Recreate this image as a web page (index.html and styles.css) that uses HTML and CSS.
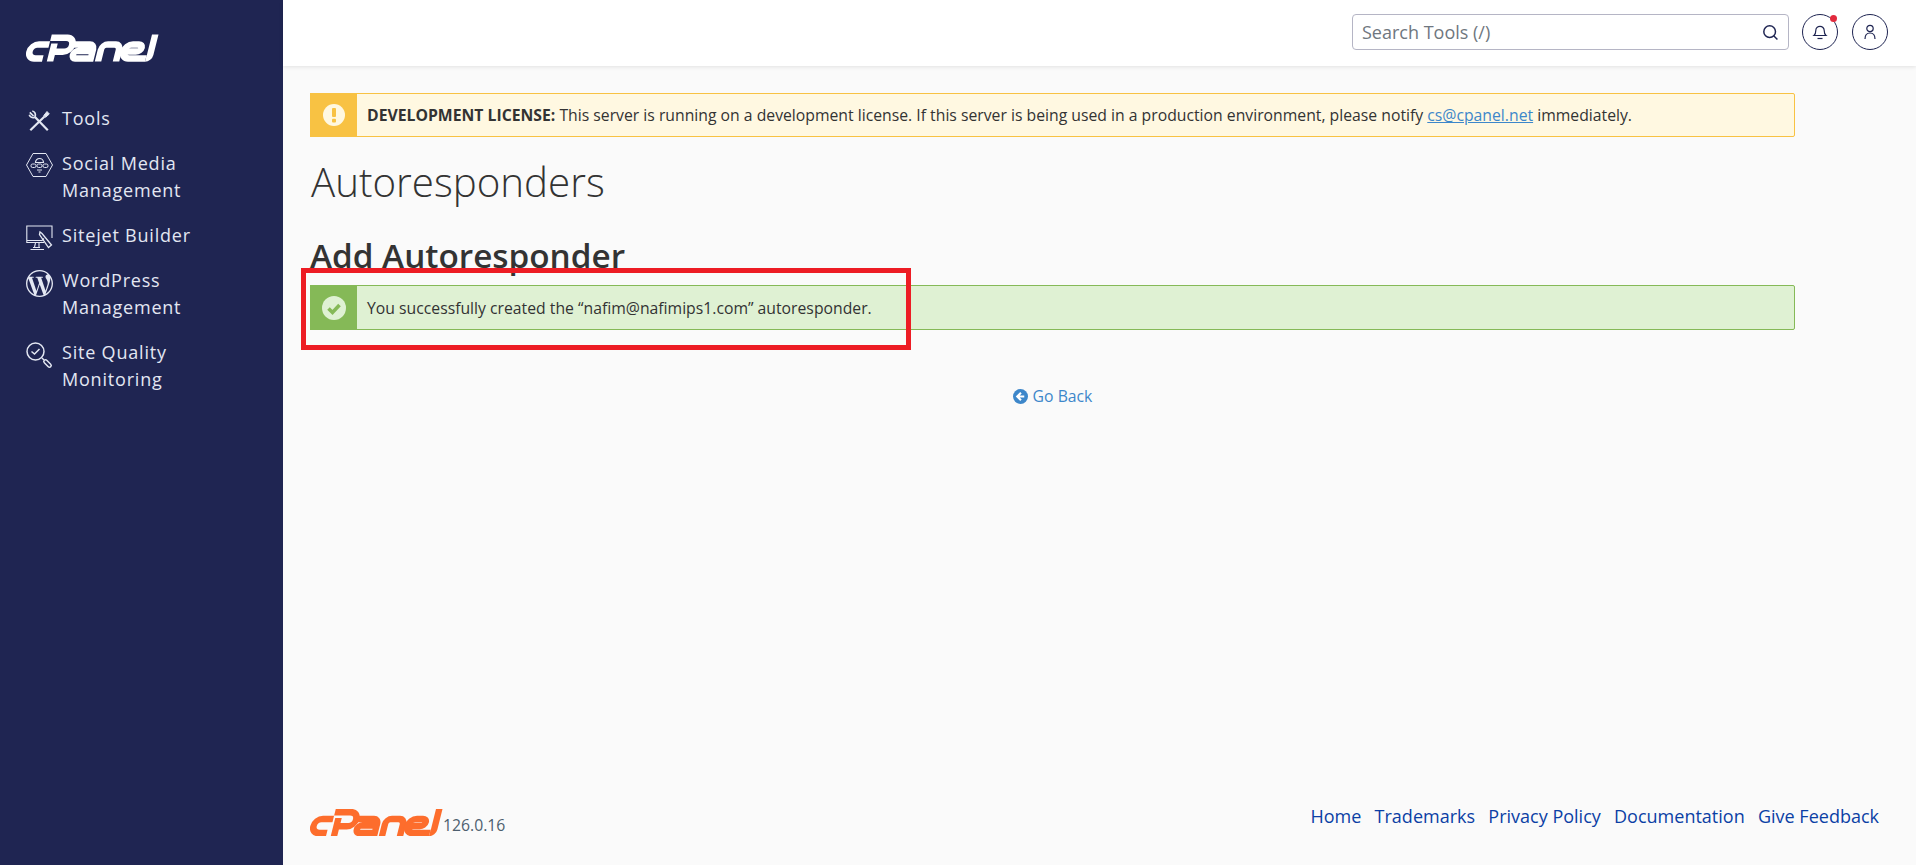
FILE: index.html
```html
<!DOCTYPE html>
<html lang="en">
<head>
<meta charset="utf-8">
<title>Autoresponders</title>
<link rel="stylesheet" href="styles.css">
</head>
<body>
<svg class="defs" width="0" height="0" aria-hidden="true">
  <symbol id="cpanel-logo" viewBox="0 0 133 27">
    <g transform="translate(6.750 0) skewX(-14)" fill="none" stroke="currentColor" stroke-width="6.500">
      <path d="M19 10H8a7 7 0 0 0 0 14H16"/>
      <path d="M19 3.200H35a7 7 0 0 1 0 14H27M24 9V27"/>
      <path d="M42 10H59a5 5 0 0 1 5 5V24H49a3.750 3.750 0 0 1 0-7.500H63"/>
      <path d="M72 27V15a5 5 0 0 1 5-5H85a5 5 0 0 1 5 5V27"/>
      <path d="M119 24H102a7 7 0 0 1 0-14H108a4.250 3.500 0 0 1 0 7H96"/>
      <path d="M122.500 0V20.500a3.500 3.500 0 0 1-3.500 3.500"/>
    </g>
  </symbol>
</svg>
<div class="app">
  <aside class="sidebar">
    <svg class="logo" aria-label="cPanel"><use href="#cpanel-logo"/></svg>
    <nav class="nav">
      <a class="nav-item">
        <svg class="nav-icon" viewBox="0 0 27 27" fill="none" stroke="currentColor" stroke-width="2.200"><path d="M8.500 8.500 21.800 22.300"/><path d="M3.800 4.300 7.500 8M3.300 6.800a3.800 3.800 0 0 0 5.400 2.400M6.300 3a3.800 3.800 0 0 1 2.600 5.600" stroke-width="1.700"/><path d="M18.500 8.500 4.300 22.300"/><path d="M17.800 7.500 21 3.500 23.300 6 19.500 9.300Z" fill="currentColor" stroke-width="1"/></svg>
        <span>Tools</span>
      </a>
      <a class="nav-item">
        <svg class="nav-icon" viewBox="0 0 27 27" fill="none" stroke="currentColor" stroke-width="1"><path d="M7 .5H20L26.500 12 20 23.500H7L.5 12Z"/><path d="M9.500 9.500a4 4 0 0 1 8 0Z" stroke-width="1.200"/><rect x="5" y="11" width="5" height="3.500" rx="1.500"/><rect x="11" y="11" width="5" height="3.500" rx="1.500"/><rect x="17" y="11" width="5" height="3.500" rx="1.500"/><path d="M11 17h5M12.500 19h2"/></svg>
        <span>Social Media Management</span>
      </a>
      <a class="nav-item">
        <svg class="nav-icon" viewBox="0 0 27 27" fill="none" stroke="currentColor" stroke-width="1.100"><path d="M18 17.500H.8V1H26V13M.8 15.500H16M13 18v4M9.500 18l-1 4M4.500 24.500H18M7 22.500h7"/><path d="M13.500 9.500 14 7l2 1.500 9.500 11.500-3 2.500Z" stroke-width="1.300"/><path d="M18 13.500 15.500 16"/></svg>
        <span>Sitejet Builder</span>
      </a>
      <a class="nav-item">
        <svg class="nav-icon" viewBox="0 0 24 24" fill="currentColor"><path d="M21.469 6.825c.84 1.537 1.318 3.3 1.318 5.175 0 3.979-2.156 7.456-5.363 9.325l3.295-9.527c.615-1.54.82-2.771.82-3.864 0-.405-.026-.78-.07-1.11m-7.981.105c.647-.03 1.232-.105 1.232-.105.582-.075.514-.93-.067-.899 0 0-1.755.135-2.88.135-1.064 0-2.85-.15-2.85-.15-.585-.03-.661.855-.075.885 0 0 .54.061 1.125.09l1.68 4.605-2.37 7.08L5.354 6.9c.649-.03 1.234-.1 1.234-.1.585-.075.516-.93-.065-.896 0 0-1.746.138-2.874.138-.2 0-.438-.008-.69-.015C4.911 3.15 8.235 1.215 12 1.215c2.809 0 5.365 1.072 7.286 2.833-.046-.003-.091-.009-.141-.009-1.06 0-1.812.923-1.812 1.914 0 .89.513 1.643 1.06 2.531.411.72.89 1.643.89 2.977 0 .915-.354 1.994-.821 3.479l-1.075 3.585-3.9-11.61.001.014zM12 22.784c-1.059 0-2.081-.153-3.048-.437l3.237-9.406 3.315 9.087c.024.053.05.101.078.149-1.12.393-2.325.609-3.582.609M1.211 12c0-1.564.336-3.05.935-4.39L7.29 21.709C3.694 19.96 1.212 16.271 1.211 12M12 0C5.385 0 0 5.385 0 12s5.385 12 12 12 12-5.385 12-12S18.615 0 12 0"/></svg>
        <span>WordPress Management</span>
      </a>
      <a class="nav-item">
        <svg class="nav-icon" viewBox="0 0 27 27" fill="none" stroke="currentColor" stroke-width="1.500"><circle cx="9.500" cy="9.500" r="8.500"/><path d="M5.500 9.500 8.500 12 13.500 7"/><path d="M16 16l2 2"/><rect x="-1.700" y="-4.500" width="3.400" height="9" rx="1.700" transform="translate(21.500 21.500) rotate(-45)"/></svg>
        <span>Site Quality Monitoring</span>
      </a>
    </nav>
  </aside>
  <div class="main">
    <header class="topbar">
      <div class="search">
        <span class="search-label">Search Tools (/)</span>
        <svg class="search-icon" viewBox="0 0 16 16" fill="none" stroke="#1f2552" stroke-width="1.400"><circle cx="7.200" cy="7.200" r="5.500"/><path d="M11 11l3.500 3.500"/></svg>
      </div>
      <div class="round-btn">
        <svg viewBox="0 0 16 16" fill="none" stroke="#1f2552" stroke-width="1.200" class="round-icon"><path d="M2 11.500c1.200-1 1.800-2.500 1.800-5a4.200 4.200 0 0 1 8.400 0c0 2.500.6 4 1.800 5Z"/><path d="M5.500 14.500h5"/></svg>
        <span class="dot"></span>
      </div>
      <div class="round-btn">
        <svg viewBox="0 0 16 16" fill="none" stroke="#1f2552" stroke-width="1.200" class="round-icon"><circle cx="8" cy="4.500" r="3.200"/><path d="M3 15c0-3.800 2-6 5-6s5 2.200 5 6"/></svg>
      </div>
    </header>
    <main class="content">
      <div class="alert alert-warn">
        <div class="alert-side">
          <svg viewBox="0 0 24 24" class="alert-icon"><circle cx="12" cy="12" r="11" fill="#fff8e1"/><rect x="10" y="5" width="4" height="9" rx="1" fill="#f8c243"/><rect x="10" y="15.800" width="4" height="3.700" rx="1" fill="#f8c243"/></svg>
        </div>
        <p class="alert-text"><strong>DEVELOPMENT LICENSE:</strong> This server is running on a development license. If this server is being used in a production environment, please notify <a class="mail">cs@cpanel.net</a> immediately.</p>
      </div>
      <h1 class="title">Autoresponders</h1>
      <h2 class="subtitle">Add Autoresponder</h2>
      <div class="alert alert-ok">
        <div class="alert-side">
          <svg viewBox="0 0 24 24" class="alert-icon"><circle cx="12" cy="12" r="12" fill="#dff1d3"/><path d="M6.500 12.500 10.500 16.500 17.500 9" fill="none" stroke="#85b957" stroke-width="3.600"/></svg>
        </div>
        <p class="alert-text">You successfully created the “nafim@nafimips1.com” autoresponder.</p>
        <div class="highlight"></div>
      </div>
      <a class="back">
        <svg viewBox="0 0 16 16" class="back-icon"><circle cx="8" cy="8" r="8" fill="#3d87ca"/><path d="M8.500 4 4.500 8l4 4M5 8h7" fill="none" stroke="#fff" stroke-width="2.200"/></svg>
        <span>Go Back</span>
      </a>
    </main>
    <footer class="footer">
      <div class="brand">
        <svg class="footer-logo" aria-label="cPanel"><use href="#cpanel-logo"/></svg>
        <span class="version">126.0.16</span>
      </div>
      <nav class="footer-links">
        <a>Home</a><a>Trademarks</a><a>Privacy Policy</a><a>Documentation</a><a>Give Feedback</a>
      </nav>
    </footer>
  </div>
</div>
</body>
</html>
```

FILE: styles.css
```css
* { box-sizing: border-box; }
html, body { margin: 0; height: 100%; overflow: hidden; }
body { font-family: "Open Sans", sans-serif; font-size: 15.75px; color: #333; background: #fafafa; }
.defs { display: block; height: 0; }
.app { display: flex; height: 865px; }

.sidebar { width: 283px; flex: none; background: #1f2552; color: #e3e7f2; padding: 34px 26px 0; }
.logo { display: block; width: 133px; height: 28px; color: #fff; }
.nav { display: flex; flex-direction: column; gap: 18px; margin-top: 43px; }
.nav-item { display: flex; gap: 9px; font-size: 18px; line-height: 27px; letter-spacing: .8px; }
.nav-icon { width: 27px; height: 27px; flex: none; margin: 3px 0 -3px; overflow: visible; }

.main { flex: 1; display: flex; flex-direction: column; min-width: 0; }
.topbar { height: 66px; flex: none; background: #fff; box-shadow: 0 1px 4px rgba(0,0,0,.1); display: flex; align-items: center; justify-content: flex-end; gap: 14px; padding: 0 28px 2px 0; }
.search { width: 437px; height: 36px; margin-right: -1px; border: 1px solid #b5b5c5; border-radius: 4px; display: flex; align-items: center; justify-content: space-between; padding: 0 9px; background: #fff; }
.search-label { font-size: 18px; color: #6f7780; }
.search-icon { width: 17px; height: 17px; }
.round-btn { position: relative; width: 36px; height: 36px; border: 1px solid #1f2552; border-radius: 50%; display: flex; align-items: center; justify-content: center; }
.round-icon { width: 16px; height: 16px; }
.dot { position: absolute; top: 0; right: 0; width: 7px; height: 7px; border-radius: 50%; background: #e22b3e; }

.content { flex: 1; padding: 27px 121px 0 27px; }
.alert { position: relative; display: flex; align-items: stretch; min-height: 44px; border: 1px solid; border-radius: 2px; }
.alert-warn { background: #fff8e1; border-color: #f8c243; }
.alert-ok { background: #dff1d3; border-color: #85b957; height: 45px; }
.alert-side { width: 47px; margin: -1px 0 -1px -1px; flex: none; display: flex; align-items: center; justify-content: center; }
.alert-warn .alert-side { background: #f8c243; }
.alert-ok .alert-side { background: #85b957; }
.alert-icon { width: 24px; height: 24px; }
.alert-text { margin: 0; padding: 0 10px 0 10px; align-self: center; line-height: 22px; color: #333; }
.mail { color: #3d87ca; text-decoration: underline; }
.highlight { position: absolute; left: -10px; top: -18px; width: 610px; height: 82px; border: 5px solid #ed1c24; }

.title { margin: 13px 0 0 1px; font-size: 40.300px; font-weight: 300; line-height: 64px; color: #333; }
.subtitle { margin: 19px 0 0; font-size: 33.300px; font-weight: 600; line-height: 44px; color: #333; height: 52px; }

.back { display: flex; align-items: center; justify-content: center; gap: 5px; margin-top: 56px; line-height: 20px; color: #3d87ca; }
.back-icon { width: 15px; height: 15px; }

.footer { height: 70px; flex: none; display: flex; align-items: flex-start; justify-content: space-between; padding: 0 37px 0 27px; }
.brand { display: flex; align-items: center; margin-top: 13px; }
.footer-logo { display: block; width: 133px; height: 27px; color: #fd6d2c; }
.version { color: #4d5e6e; padding-top: 6px; }
.footer-links { display: flex; gap: 13.300px; margin-top: 10px; font-size: 18px; line-height: 22px; color: #0b3fa5; }
```
